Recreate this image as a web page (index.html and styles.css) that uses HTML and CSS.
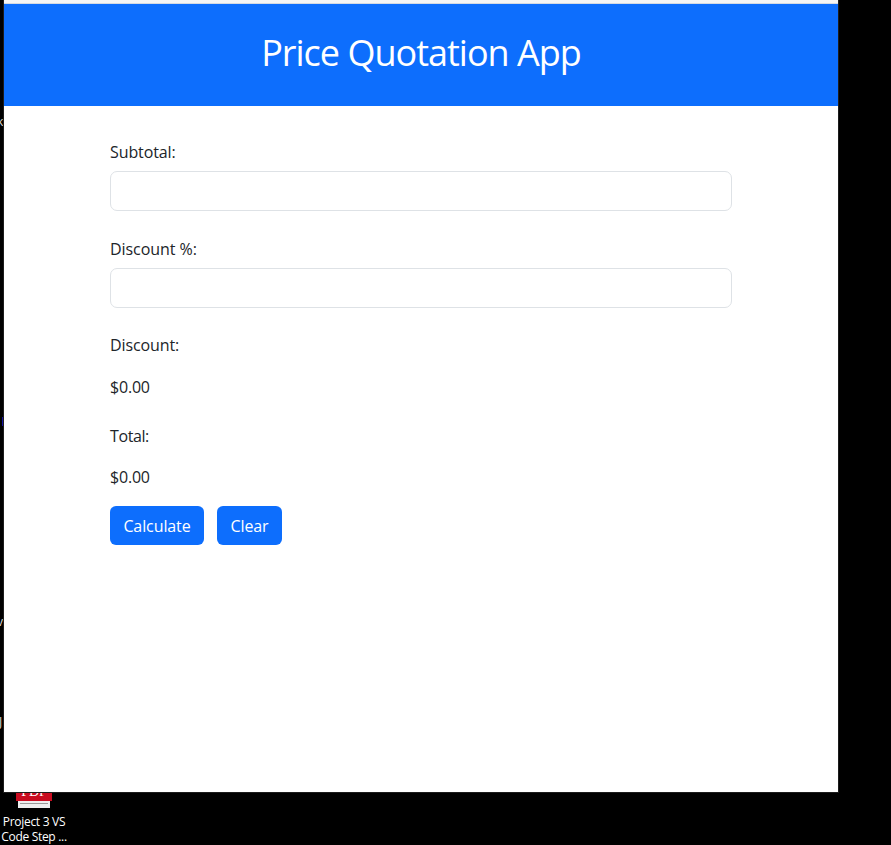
FILE: index.html
```html
<!DOCTYPE html>
<html lang="en">
<head>
<meta charset="utf-8">
<title>Price Quotation App</title>
<link rel="stylesheet" href="styles.css">
</head>
<body>
<div class="desktop">
  <span class="edge edge-k">k</span>
  <i class="edge-mark"></i>
  <span class="edge edge-v">v</span>
  <span class="edge edge-j">J</span>
  <div class="shortcut">
    <svg class="pdf" width="36" height="28" viewBox="0 0 36 28">
      <path d="M2 0h32v28H2z" fill="#eee"/>
      <path d="M0 0h36v21H0z" fill="#c90c20"/>
      <path d="M4 23.5h28" stroke="#999" stroke-width="1"/>
      <text class="pdf-text" x="18" y="16" text-anchor="middle">PDF</text>
    </svg>
    <div class="shortcut-name">Project 3 VS<br>Code Step ...</div>
  </div>
  <main class="window">
    <header class="banner"><h1>Price Quotation App</h1></header>
    <form class="form">
      <label class="label" for="subtotal">Subtotal:</label>
      <input class="input" id="subtotal" type="text">
      <label class="label percent" for="percent">Discount %:</label>
      <input class="input last-input" id="percent" type="text">
      <div class="label">Discount:</div>
      <p class="value">$0.00</p>
      <div class="label total">Total:</div>
      <p class="value">$0.00</p>
      <div class="actions">
        <button class="button calculate" type="button">Calculate</button>
        <button class="button clear" type="button">Clear</button>
      </div>
    </form>
  </main>
</div>
</body>
</html>
```
FILE: styles.css
```css
* { box-sizing: border-box; }
body { margin: 0; background: #000; font-family: "Open Sans", "Noto Sans", sans-serif; color: #212529; }
.desktop { position: relative; width: 891px; height: 845px; overflow: hidden; background: #000; }
.window { position: absolute; left: 3px; top: 0; width: 836px; height: 793px; background: #fff; border: 1px solid #1c1c1c; border-top: 0; }
.banner { height: 106px; background: #0d6efd; border-top: 3px solid #f5f5f5; box-shadow: inset 0 1px #d5dae2; text-align: center; }
h1 { margin: 0; padding-top: 26px; font-size: 36px; line-height: 48px; font-weight: 400; letter-spacing: -1px; color: #fff; }
.form { width: 622px; margin: 33px 0 0 106px; font-size: 16px; }
.label { display: block; height: 26px; line-height: 26px; letter-spacing: -0.1px; }
.percent { letter-spacing: -0.05px; }
.input { display: block; width: 622px; height: 40px; margin: 6px 0 25px; border: 1px solid #dee2e6; border-radius: 7px; background: #fff; padding: 6px 12px; font: inherit; }
.last-input { margin-bottom: 24px; }
.value { height: 26px; line-height: 26px; margin: 16px 0 23px; letter-spacing: -0.2px; }
.total { letter-spacing: -0.4px; }
.total + .value { margin: 15px 0 16px; }
.actions { display: flex; gap: 13px; }
.button { height: 39px; border: 0; border-radius: 6px; background: #0d6efd; color: #fff; font: inherit; padding: 0; letter-spacing: -0.1px; }
.calculate { width: 94px; }
.clear { width: 65px; }
.shortcut { position: absolute; left: -1px; top: 780px; width: 70px; color: #fff; }
.pdf { display: block; margin-left: 17px; }
.pdf-text { font: 400 14px "Liberation Serif", serif; fill: #fff; }
.shortcut-name { margin-top: 6px; font-size: 12px; line-height: 15px; text-align: center; white-space: nowrap; letter-spacing: -0.3px; }
.edge { position: absolute; left: -3px; font-size: 12px; line-height: 15px; color: #ddd; }
.edge-k { top: 114px; }
.edge-v { top: 614px; }
.edge-j { top: 714px; left: -1px; }
.edge-mark { position: absolute; left: 2px; top: 417px; width: 1px; height: 9px; background: #1614a0; }
```
